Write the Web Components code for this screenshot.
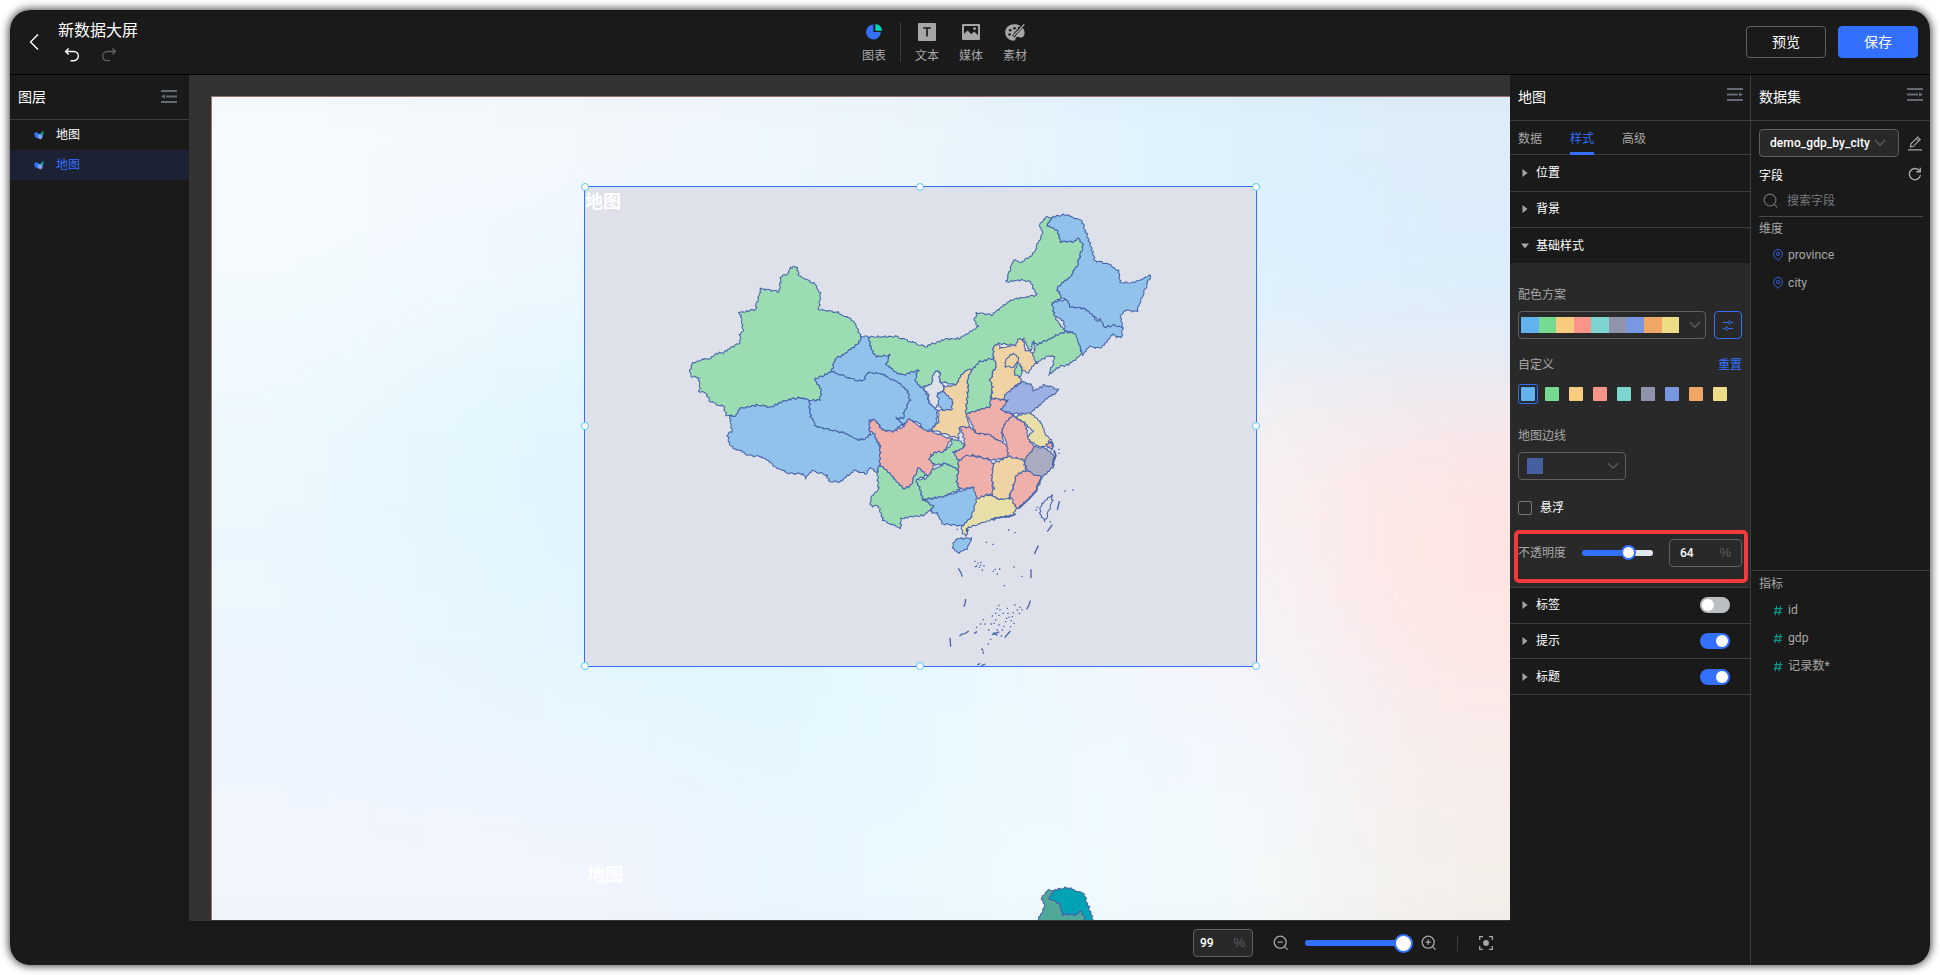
<!DOCTYPE html>
<html lang="zh">
<head>
<meta charset="utf-8">
<title>新数据大屏</title>
<style>
html,body{margin:0;height:100%;background:#fff;overflow:hidden}
body{font:12px/18px Roboto,"Noto Sans CJK SC",sans-serif;color:#fff}
</style>
</head>
<body>
<screen-editor></screen-editor>
<script>
const define = (name, html, setup) => customElements.define(name, class extends HTMLElement {
  connectedCallback() {
    if (this.shadowRoot) return;
    const t = document.createElement('template');
    t.innerHTML = '<style>*{box-sizing:border-box}svg{display:block}</style>' + (typeof html === 'function' ? html(this) : html);
    this.attachShadow({mode: 'open'}).append(t.content.cloneNode(true));
    if (setup) setup(this, this.shadowRoot);
  }
});

/* ---------- icons ---------- */
const ICONS = {
  back: [10, 18, '<path d="M9 1.5 1.5 9 9 16.5" fill="none" stroke="#fff" stroke-width="1.4"/>'],
  undo: [16, 16, '<path d="M4.6 1.5 1.6 4.5l3 3M1.8 4.5h8a4.6 4.6 0 0 1 0 9.2H6.6" fill="none" stroke="#fff" stroke-width="1.4"/>'],
  redo: [16, 16, '<path d="m11.4 1.5 3 3-3 3M14.2 4.5h-8a4.6 4.6 0 0 0 0 9.2h3.2" fill="none" stroke="#5f5f5f" stroke-width="1.3"/>'],
  chart: [16, 16, '<path d="M7.6 1.2v7.4H15A7.4 7.4 0 1 1 7.6 1.2z" transform="translate(-.2 -.6)" fill="#3370ff"/><path d="M9.4 0A6.8 6.8 0 0 1 16 6.8H9.4z" fill="#00d6b9"/>'],
  text: [18, 18, '<rect width="18" height="18" rx="1" fill="#a6a6a6"/><path d="M5.2 5h7.6M9 5v8.6" stroke="#1a1a1a" stroke-width="1.7"/>'],
  media: [18, 16, '<rect width="18" height="16" rx="1" fill="#a6a6a6"/><path d="M2 2h14v9l-4-3.6-2.6 2.8L5.6 6.6 2 9.8z" fill="#1a1a1a"/><circle cx="12.6" cy="4.6" r="1.4" fill="#a6a6a6"/>'],
  palette: [20, 17, '<path d="M9.5.3C4 .3.2 3.8.2 8.5s3.800 8.200 8.600 8.200c2.200 0 1.400-2.400 2.400-3.400 1.600-1.200 3.200.6 5.600.2 2-.4 3-2.900 2.800-5.300C19.200 3.400 15 .3 9.500.3z" fill="#a6a6a6"/><path d="M19 .2 10.600 9.400 8.600 12.600" stroke="#1a1a1a" stroke-width="3" fill="none"/><path d="M19.300.3 11 9.200 8.800 12" stroke="#a6a6a6" stroke-width="1.300" fill="none"/><g fill="#1a1a1a"><circle cx="9.500" cy="4.300" r="1.300"/><circle cx="5.200" cy="6.200" r="1.300"/><circle cx="4.600" cy="10.500" r="1.300"/><circle cx="13.800" cy="3.800" r="1"/></g>'],
  foldL: [16, 13, '<path d="M0 1h16M5 6.500h11M0 12h16" stroke="#646a73" stroke-width="2"/><path d="M0 6.500 4 4.200v4.600z" fill="#646a73"/>'],
  foldR: [16, 13, '<path d="M0 1h16M0 6.500h11M0 12h16" stroke="#646a73" stroke-width="2"/><path d="M16 6.500 12 4.200v4.600z" fill="#646a73"/>'],
  map: [10, 9, '<path d="M0 2.600 2.200.9l2 1.300L5.600 3 5.400 6.600 3.600 7.600 1 6z" fill="#3370ff"/><path d="M4.200 3.600 6.400 3l2.400 1.200L8.200 7.200 6.400 8.600 4 7z" fill="#7fa6f2"/><path d="M6.200 3 8.400.5l1.400.3-.6 2.600-1.700 1.200z" fill="#12a594"/>'],
  caret: [6, 8, '<path d="M.5 0 5.500 4 .5 8z" fill="#a6a6a6"/>'],
  caretDown: [8, 6, '<path d="M0 .5 4 5.500 8 .5z" fill="#a6a6a6"/>'],
  chevron: [12, 8, '<path d="m.8 1 5.200 5.200L11.200 1" fill="none" stroke="#5f6065" stroke-width="1.200"/>'],
  sliders: [10, 11, '<g fill="none" stroke="#3370ff"><path d="M0 2.500h4.800M8.200 2.500H10M0 8.500h2M5.400 8.500H10"/><circle cx="6.500" cy="2.500" r="1.500"/><circle cx="3.700" cy="8.500" r="1.500"/></g>'],
  edit: [14, 15, '<path d="M2.400 11 3 7.800 9.800 1l2.400 2.400-6.800 6.900z M8.400 2.600l2.300 2.300" fill="none" stroke="#a6a6a6" stroke-width="1.200"/><path d="M0 13.900h14" stroke="#a6a6a6" stroke-width="1.400"/>'],
  refresh: [14, 14, '<path d="M11.800 4.200A5.600 5.600 0 1 0 12.500 8" fill="none" stroke="#a6a6a6" stroke-width="1.400"/><path d="M12.300.8v4H8.300" fill="none" stroke="#a6a6a6" stroke-width="1.400"/>'],
  search: [16, 16, '<g fill="none" stroke="#6b6f76" stroke-width="1.200"><circle cx="7" cy="7" r="5.900"/><path d="m11.300 11.300 3 3"/></g>'],
  pin: [10, 12, '<g fill="none" stroke="#3563d8"><path d="M5 11.300C2.600 9.300.6 7.300.6 4.900a4.400 4.400 0 0 1 8.800 0c0 2.400-2 4.400-4.400 6.400z"/><circle cx="5" cy="4.900" r="1.600"/></g>'],
  hash: [10, 11, '<path d="M3.800.8 2.200 10.200M7.600.8 6 10.200M1.200 3.600h8M.6 7.400h8" stroke="#0a9a87" stroke-width="1.100"/>'],
  zoomOut: [16, 16, '<g fill="none" stroke="#a6a6a6" stroke-width="1.300"><circle cx="7.200" cy="7.200" r="6"/><path d="m11.600 11.600 3 3M4.600 7.200h5.200"/></g>'],
  zoomIn: [16, 16, '<g fill="none" stroke="#a6a6a6" stroke-width="1.300"><circle cx="7.200" cy="7.200" r="6"/><path d="m11.600 11.600 3 3M4.600 7.200h5.200M7.200 4.600v5.200"/></g>'],
  focus: [14, 14, '<path d="M.7 4V.7H4M10 .7h3.300V4M13.300 10v3.300H10M4 13.300H.7V10" fill="none" stroke="#a6a6a6" stroke-width="1.300"/><circle cx="7" cy="7" r="2.900" fill="#a6a6a6"/>']
};
define('ui-icon', el => {
  const [w, h, body] = ICONS[el.getAttribute('name')];
  return `<style>:host{display:block;flex:none;width:${w}px;height:${h}px}</style><svg width="${w}" height="${h}" viewBox="0 0 ${w} ${h}">${body}</svg>`;
});

/* ---------- small controls ---------- */
define('ui-button', `<style>
:host{display:flex;align-items:center;justify-content:center;width:80px;height:32px;border:1px solid #5f5f5f;border-radius:4px;box-sizing:border-box;font-size:14px;line-height:20px}
:host([primary]){background:#3370ff;border-color:#3370ff}</style><slot></slot>`);

define('ui-switch', `<style>
:host{display:flex;width:30px;height:16px;border-radius:8px;background:#bbbfc4;padding:2px;box-sizing:border-box}
:host([on]){background:#3370ff;justify-content:flex-end}
i{width:12px;height:12px;border-radius:50%;background:#fff}</style><i></i>`);

define('ui-number', `<style>
:host{display:flex;justify-content:space-between;align-items:center;height:28px;border:1px solid #5f5f5f;border-radius:4px;box-sizing:border-box;font-size:12px}
b{font-weight:500}
span{color:#5f6065;font:13px/18px "Liberation Sans",sans-serif}</style><b><slot></slot></b><span>%</span>`);

define('ui-slider', el => `<style>
:host{display:flex;align-items:center;height:20px}
div{display:flex;align-items:center;width:100%;height:6px;border-radius:3px;background:linear-gradient(90deg,#3370ff ${el.getAttribute('value')}%,#e4e7ed 0)}
i{flex:none;width:var(--thumb,15px);height:var(--thumb,15px);border-radius:50%;border:2px solid #3370ff;background:#fff;margin-left:calc(${el.getAttribute('value')}% - var(--thumb,15px)/2)}
</style><div><i></i></div>`);

/* ---------- header ---------- */
define('tool-item', el => `<style>
:host{display:flex;flex-direction:column;align-items:center;width:24px;font-size:12px;line-height:18px;color:#a6a6a6;white-space:nowrap}
div{height:20px;display:flex;align-items:center;margin-bottom:5px}</style>
<div><ui-icon name="${el.getAttribute('icon')}"></ui-icon></div><slot></slot>`);

define('top-bar', `<style>
:host{display:grid;grid-template-columns:852px 1fr auto;height:65px;border-bottom:1px solid #000;box-sizing:border-box}
.left{display:flex;padding:0 0 0 19px}
.left>ui-icon{margin-top:23px}
.name{margin-left:19px;padding-top:7px}
.name b{display:block;font:400 16px/24px "Noto Sans CJK SC",sans-serif;height:24px}
.hist{display:flex;gap:21px;margin:6px 0 0 6px}
.tools{display:flex;padding-top:12px}
.sep{width:1px;height:40px;background:#3c3c3c;margin:0 14px 0 14px}
.right{display:flex;gap:12px;padding:16px 12px 0 0}
tool-item+tool-item{margin-left:20px}
</style>
<div class="left"><ui-icon name="back"></ui-icon><div class="name"><b>新数据大屏</b><div class="hist"><ui-icon name="undo"></ui-icon><ui-icon name="redo"></ui-icon></div></div></div>
<div class="tools"><tool-item icon="chart">图表</tool-item><i class="sep"></i><tool-item icon="text">文本</tool-item><tool-item icon="media">媒体</tool-item><tool-item icon="palette">素材</tool-item></div>
<div class="right"><ui-button>预览</ui-button><ui-button primary>保存</ui-button></div>`);

/* ---------- panels ---------- */
define('panel-title', el => `<style>
:host{display:flex;align-items:center;justify-content:space-between;height:46px;padding:0 7px 2px 8px;border-bottom:1px solid #3d3d3d;box-sizing:border-box;font-size:14px;line-height:20px}
ui-icon{margin-top:var(--icon-shift,-4px)}</style><span><slot></slot></span><ui-icon name="${el.getAttribute('icon')}"></ui-icon>`);

define('layer-row', `<style>
:host{display:flex;align-items:center;height:30px;padding-left:24px;gap:12px}
:host([active]){background:#1c2133;color:#3370ff}</style><ui-icon name="map"></ui-icon><span><slot></slot></span>`);

define('layer-panel', `<style>:host{display:block}panel-title{height:45px;padding-right:12px;padding-bottom:1px;--icon-shift:0px}</style>
<panel-title icon="foldL">图层</panel-title><layer-row>地图</layer-row><layer-row active>地图</layer-row>`);

define('fold-row', el => `<style>
:host{display:flex;align-items:center;height:36px;padding:0 20px 0 12px;border-bottom:1px solid #3d3d3d;box-sizing:border-box}
:host([open]){border:0}
.c{width:14px;display:flex}:host([open]) .c{margin-left:-1px;width:15px}
span{flex:1}</style><div class="c"><ui-icon name="${el.hasAttribute('open') ? 'caretDown' : 'caret'}"></ui-icon></div><span><slot></slot></span><slot name="end"></slot>`);

const COLORS = ['#63b2ee','#76da91','#f8cb7f','#f89588','#7cd6cf','#9192ab','#7898e1','#efa666','#eddd86'];
define('style-panel', `<style>
:host{display:block;border-right:1px solid #3d3d3d;box-sizing:border-box}
nav{display:flex;gap:28px;padding-left:8px;height:34px;border-bottom:1px solid #3d3d3d;color:#a6a6a6}
nav span{height:34px;line-height:36px}
nav .on{color:#3370ff;border-bottom:3px solid #3370ff}
.body{background:#292929;height:325px;padding:23px 8px 0;border-bottom:1px solid #3d3d3d;color:#a6a6a6}
.row{display:flex;align-items:center;justify-content:space-between}
.select{display:flex;align-items:center;justify-content:space-between;border:1px solid #5f5f5f;border-radius:4px;height:28px}
.scheme{width:188px;padding:0 4px 0 2px;margin-top:7px}
.strip{display:flex;width:158px;height:16px}.strip i{flex:1}
.adj{width:28px;height:28px;border:1px solid #3370ff;border-radius:4px;display:flex;align-items:center;justify-content:center;margin-top:7px}
.custom{margin-top:17px}.custom u{color:#3370ff;text-decoration:none}
.sw{display:flex;gap:4px;margin-top:10px}
.sw b{width:20px;height:20px;padding:2px;border:1px solid transparent;border-radius:3px}
.sw b:first-child{border-color:#3370ff}
.sw i{display:block;width:14px;height:14px;border-radius:1px}
.line{width:108px;padding:0 6px 0 8px;margin-top:7px}
.line i{width:16px;height:16px;background:#465fa3}
.check{display:flex;align-items:center;gap:8px;margin-top:19px;color:#fff}
.check i{width:14px;height:14px;border:1px solid #76787c;border-radius:2px}
.opacity{display:flex;align-items:center;height:53px;margin:13px -6px 0 -4px;border:4px solid #f33a3a;border-radius:5px;padding:0 0 8px}
.opacity span{width:64px;white-space:nowrap}
.opacity ui-slider{width:71px}
.opacity ui-number{width:73px;margin-left:16px;padding:0 10px;color:#fff}
</style>
<panel-title icon="foldR">地图</panel-title>
<nav><span>数据</span><span class="on">样式</span><span>高级</span></nav>
<fold-row style="height:37px">位置</fold-row><fold-row style="padding-bottom:1px">背景</fold-row><fold-row open style="height:35px">基础样式</fold-row>
<div class="body">
 <div>配色方案</div>
 <div class="row"><div class="select scheme"><div class="strip">${COLORS.map(c => `<i style="background:${c}"></i>`).join('')}</div><ui-icon name="chevron"></ui-icon></div><div class="adj"><ui-icon name="sliders"></ui-icon></div></div>
 <div class="row custom"><span>自定义</span><u>重置</u></div>
 <div class="sw">${COLORS.map(c => `<b><i style="background:${c}"></i></b>`).join('')}</div>
 <div style="margin-top:23px">地图边线</div>
 <div class="select line"><i></i><ui-icon name="chevron"></ui-icon></div>
 <div class="check"><i></i>悬浮</div>
 <div class="opacity"><span>不透明度</span><ui-slider value="65"></ui-slider><ui-number>64</ui-number></div>
</div>
<fold-row style="padding-bottom:1px">标签<ui-switch slot="end"></ui-switch></fold-row>
<fold-row style="height:35px">提示<ui-switch slot="end" on></ui-switch></fold-row>
<fold-row>标题<ui-switch slot="end" on></ui-switch></fold-row>`);

define('field-item', el => `<style>
:host{display:flex;align-items:center;height:28px;padding-left:14px;gap:5px;color:#a6a6a6}</style>
<ui-icon name="${el.getAttribute('icon')}"></ui-icon><span><slot></slot></span>`);

define('data-panel', `<style>
:host{display:block}
.pad{padding:8px 8px 0 8px;height:449px}
.row{display:flex;align-items:center;justify-content:space-between}
.sel{width:140px;height:28px;border:1px solid #5f5f5f;border-radius:4px;background:#292929;display:flex;align-items:center;padding:0 0 0 10px;gap:4px;font-weight:500;letter-spacing:.09px;white-space:nowrap}
.find{display:flex;align-items:center;gap:8px;height:32px;border-bottom:1px solid #4a4a4a;color:#75787d;padding:1px 0 0 4px;margin-right:-1px}
.m{color:#a6a6a6}
.low{border-top:1px solid #3d3d3d;padding:4px 8px}
field-item{font-size:12.200px}
</style>
<panel-title icon="foldR">数据集</panel-title>
<div class="pad">
 <div class="row"><div class="sel"><span>demo_gdp_by_city</span><ui-icon name="chevron"></ui-icon></div><ui-icon name="edit"></ui-icon></div>
 <div class="row" style="margin-top:10px"><span>字段</span><ui-icon name="refresh" style="margin-top:-4px"></ui-icon></div>
 <div class="find"><ui-icon name="search"></ui-icon><span>搜索字段</span></div>
 <div class="m" style="margin:3px 0 3px">维度</div>
 <field-item icon="pin">province</field-item><field-item icon="pin">city</field-item>
</div>
<div class="low"><div class="m" style="margin-bottom:3px">指标</div>
<field-item icon="hash">id</field-item><field-item icon="hash">gdp</field-item><field-item icon="hash">记录数*</field-item></div>`);

/* ---------- map widget ----------
   Outlines are survey points at 3x scale. A, B and C are the origins of the
   western, north-eastern and southern sheets. */
const ORIGIN = {A: [0, 0], B: [780, 0], C: [480, 600]};
const REGIONS = [
 ['g','A 28,512 38,490 75,475 85,480 103,462 128,458 180,428 180,405 190,395 182,345 176,338 230,328 228,318 243,266 298,275 303,230 326,220 330,203 350,200 355,222 375,238 405,250 422,285 416,328 475,338 520,362 543,408 538,430 490,465 466,475 455,515 405,538 425,570 420,600 388,602 360,592 315,602 270,622 235,615 182,625 165,648 140,645 130,620 90,605 78,580 52,572 60,565 55,532 35,530'],
 ['b','A 150,650 165,648 182,625 235,615 270,622 315,602 360,592 388,602 392,650 410,680 500,700 540,720 570,705 582,700 600,745 603,795 590,815 570,805 560,822 525,812 480,845 448,845 440,825 395,812 378,836 370,822 320,820 280,795 245,770 205,765 150,738 142,700 155,695'],
 ['b','A 543,408 565,410 575,450 590,470 630,465 618,495 645,515 668,525 715,510 705,540 722,562 735,570 750,612 772,628 770,665 755,690 730,695 720,672 690,658 670,675 655,655 670,655 672,635 690,600 680,568 640,540 600,520 560,518 555,540 530,542 455,515 466,475 490,465 538,430'],
 ['b','A 455,515 405,538 425,570 420,600 388,602 392,650 410,680 500,700 525,718 555,718 570,700 568,660 585,658 605,688 640,695 655,680 670,675 645,652 670,655 672,635 690,600 680,568 640,540 600,520 560,518 555,540 530,542'],
 ['b','A 772,580 790,575 820,595 818,628 795,632 772,615'],
 ['g','A 565,410 650,410 735,440 795,418 B 60,415 115,378 103,360 110,338 155,345 178,325 220,298 292,285 270,245 245,240 198,245 220,180 245,187 278,165 308,100 298,72 315,52 335,52 322,78 352,90 362,125 405,125 415,115 430,135 412,195 395,225 350,262 365,295 335,308 345,350 375,395 290,435 280,422 272,455 250,415 225,435 175,430 160,440 160,475 120,485 95,508 75,512 45,555 20,548 A 778,545 780,515 765,515 755,552 722,562 705,540 715,510 668,525 645,515 618,495 630,465 590,470 575,450'],
 ['b','B 335,52 375,43 425,62 450,130 465,182 500,190 535,210 542,248 580,248 632,226 622,250 590,335 555,330 542,350 548,385 525,375 495,382 480,360 460,350 430,325 390,322 380,298 365,295 350,262 395,225 412,195 430,135 415,115 405,125 362,125 352,90 322,78'],
 ['b','B 335,308 380,298 390,322 430,325 460,350 470,365 480,357 495,382 525,375 548,385 545,410 530,412 520,402 480,445 450,440 428,465 420,440 400,400 375,390 370,360 345,350'],
 ['g','B 280,422 290,435 375,395 405,400 420,440 425,465 390,492 360,500 325,525 340,490 343,470 325,467 290,490 270,470 285,450'],
 ['n','A 772,510 780,520 778,545 792,555 788,575 770,580 778,600 768,625 748,612 745,580 730,562 755,552 760,520'],
 ['t','B 95,508 75,512 45,555 12,560 8,575 38,600 35,628 -5,632 -5,665 -25,690 10,700 55,715 60,680 90,683 78,642 85,560 82,540'],
 ['g','B 95,508 120,485 160,475 170,490 150,540 158,560 152,595 150,620 78,642 85,560 82,540'],
 ['t','B 160,440 175,430 180,445 225,435 240,413 252,425 255,450 272,455 290,488 265,518 248,512 240,490 235,528 245,545 215,565 195,600 155,595 158,560 150,540 165,505 170,490 160,475'],
 ['t','B 195,490 205,470 218,460 235,475 230,490 222,502 195,500'],
 ['g','B 235,485 242,500 247,515 240,530 222,525 225,508'],
 ['p','B 78,642 150,620 152,595 190,600 205,605 180,628 218,645 205,660 185,690 190,730 150,705 110,700'],
 ['p','B 60,680 90,683 110,700 150,705 190,730 205,740 205,770 165,780 135,775 100,765 55,782 35,760 75,742 72,715'],
 ['p','B 218,645 255,670 262,700 270,725 282,740 260,785 205,770 200,730 185,690 205,660'],
 ['y','B 215,640 225,650 270,635 305,670 315,700 338,725 305,742 270,725 260,710 278,695 255,670'],
 ['v','B 190,600 200,580 250,545 275,555 280,572 315,555 355,568 350,580 325,590 270,640 215,640 180,628 205,600'],
 ['p','B 320,730 335,730 338,745 322,743'],
 ['s','B 252,785 282,740 320,745 345,770 340,800 305,832 265,820'],
 ['p','C 88,92 90,62 105,58 125,90 160,95 190,80 210,55 250,90 275,95 335,118 310,155 270,165 280,190 280,225 262,225 235,205 210,260 190,265 145,215 120,198 120,135 100,100'],
 ['g','C 118,198 145,215 190,265 210,260 235,205 262,225 228,240 240,265 248,300 284,318 255,345 182,355 182,385 130,362 115,318 92,318 92,295 115,268 112,215'],
 ['g','C 335,115 372,130 370,145 340,155 355,185 355,212 320,190 285,195 268,180 280,158 310,155 335,130'],
 ['g','C 228,240 262,235 275,210 320,190 355,212 350,240 358,268 310,290 248,298 240,265'],
 ['p','C 355,182 380,165 435,175 462,190 455,235 462,285 440,283 410,298 398,262 358,268 350,240 355,212'],
 ['t','C 460,190 505,170 550,178 558,212 530,225 520,260 503,300 480,298 455,285 462,265 455,235'],
 ['p','C 558,212 605,232 590,270 570,290 530,328 505,300 520,260 530,225'],
 ['b','C 248,300 310,290 398,262 415,300 395,350 365,378 310,372 290,340 270,335 284,318'],
 ['y','C 410,298 440,283 462,290 480,298 515,295 528,322 520,345 465,355 380,385 380,408 368,402 365,378 395,350'],
 ['b','C 338,430 355,415 395,415 382,445 360,458 340,450'],
 ['n','C 635,285 638,300 615,365 598,340 605,310']
];
const PALETTES = {
  soft: {g:'#9cdcb2', b:'#90c2eb', p:'#efafab', t:'#efd3a5', v:'#9cb0e3', y:'#e8dfa9', s:'#a9abc0', n:'#dee1e9', line:'#4764ab'},
  deep: {g:'#4fa898', b:'#00a3b4', p:'#00a3b4', t:'#4fa898', v:'#4fa898', y:'#4fa898', s:'#4fa898', n:'none', line:'#4764ab'}
};
const DASHES = 'M658 303l-6 27M637 374l-15 21M595 437l-12 25M573 508v26M571 602q-3 14-11 26M511 693l-17 20M355 505q9 12 12 25M376 597q2 12-5 23M330 714l2 26M412 795l8-5M424 797l12-5M358 708l12-8M372 703l14-10M456 704l22-8M460 698l12 8M403 700l8-5M425 745l4 8M430 755v6';
const ISLETS = [[504,390],[523,398],[437,427],[457,433],[403,484],[421,487],[408,498],[416,502],[425,510],[412,490],[430,498],[404,500],[420,496],[458,514],[464,508],[470,522],[477,507],[520,501],[544,529],[491,557],[475,616],[470,626],[478,629],[465,640],[475,646],[455,648],[500,625],[518,638],[530,630],[538,622],[544,629],[536,640],[505,652],[515,650],[498,655],[520,670],[512,662],[465,660],[475,675],[460,670],[428,659],[420,672],[433,672],[408,682],[444,690],[452,672],[490,680],[485,690],[470,690],[482,708],[450,718],[443,732],[673,273],[697,270],[629,365],[586,330],[590,322],[350,388],[633,150],[640,158],[655,148],[655,160],[510,680],[495,665],[523,615],[488,640],[502,640]];
/* position-based wobble, so borders shared by two regions stay together */
const wobble = (x, y) => [x + 2 * Math.sin(x * .31 + y * .37) + 1.1 * Math.sin(y * .63 - x * .49), y + 2 * Math.sin(y * .33 - x * .35 + 2) + 1.1 * Math.sin(x * .59 + y * .43)];
function outline(src) {
  let o = ORIGIN.A; const pts = [];
  for (const tok of src.split(' ')) {
    if (ORIGIN[tok]) { o = ORIGIN[tok]; continue; }
    const [x, y] = tok.split(',').map(Number); pts.push([x + o[0], y + o[1]]);
  }
  let d = '';
  pts.forEach(([x, y], i) => {
    const [u, v] = pts[(i + 1) % pts.length], n = Math.max(1, Math.round(Math.hypot(u - x, v - y) / 4));
    for (let k = 0; k < n; k++) { const w = wobble(x + (u - x) * k / n, y + (v - y) * k / n); d += (d ? 'L' : 'M') + w[0].toFixed(1) + ' ' + w[1].toFixed(1); }
  });
  return d + 'z';
}
define('map-widget', el => {
  const c = PALETTES[el.getAttribute('palette')];
  return `<style>:host{display:block;position:absolute;width:673px;height:481px;overflow:hidden;box-sizing:border-box}
  h3{margin:0;font:700 18px/26px "Noto Sans CJK SC",sans-serif;color:#fff;padding:1px 0 0 1px;height:26px}
  svg{margin-top:-26px}</style>
  <h3><slot></slot></h3>
  <svg width="673" height="481" viewBox="584 186 673 481"><g transform="translate(680 200) scale(.33333)" stroke="${c.line}" stroke-width="3.100" stroke-linejoin="round">
  ${REGIONS.map(([k, s]) => `<path d="${outline(s)}" fill="${c[k]}"/>`).join('')}
  <g transform="translate(480 600)" fill="none" stroke-width="4"><path d="${DASHES}"/>
  <path d="${ISLETS.map(([x, y]) => `M${x} ${y}h4`).join('')}"/>
  <path d="M642 150l6 18-8 10-2 20M606 232l-14 24-2 16-22 24-32 30M528 342l-20 8-46 4M454 356l8 4 6-6M378 386l6 4-4 6M624 122l14 8 2 12" stroke-width="5"/></g></g></svg>`;
});

const MESH = [
 '#f7fafe #f5f9fe #f3f7fc #eff7fc #ebf5fc #e2f3fd #dcf1fd #dfecf9',
 '#f3fafe #eff9fe #e8f7fe #e5f5fe #e5f3fd #e0f3fd #dbf1fe #d9effe',
 '#ecf8fe #e2f6fe #def4ff #e0f4ff #e8f4fc #f2f4f7 #f9efee #fce6e6',
 '#ebf7fe #e5f6ff #e2f5ff #e3f6ff #e8f6ff #f1f5fc #f8f1f2 #ffe4e2',
 '#eef5fe #e9f5ff #e5f6ff #e2f6ff #e8f9ff #eff8ff #f3f6fd #f9ebea',
 '#f1f5fe #f3f5fd #f2f5fd #eaf6ff #ebf9ff #f1fbff #f3f9fa #f4efea'].map(r => r.split(' '));
define('canvas-stage', () => {
  let cells = '';
  for (let r = -1; r < 7; r++) for (let q = -1; q < 9; q++)
    cells += `<rect x="${q * 162.5}" y="${r * 137.5}" width="164" height="139" fill="${MESH[Math.min(5, Math.max(0, r))][Math.min(7, Math.max(0, q))]}"/>`;
  return `<style>
  :host{display:block;background:#333;padding:21px 0 0 22px;overflow:hidden}
  .sheet{position:relative;height:824px;border:1px solid #98706e;border-width:1px 0 0 1px;overflow:hidden}
  .bg{position:absolute;inset:0}
  .sel{position:absolute;left:372px;top:89px;width:673px;height:481px;border:1px solid #3370ff;background:#dee1e9}
  .sel map-widget{left:-1px;top:-1px;height:480px}
  .sel i{position:absolute;width:8px;height:8px;border:1px solid #59c7f9;border-radius:50%;background:#fff;margin:-4.500px}
  .two{left:374px;top:762px}
  </style><div class="sheet"><svg class="bg" width="1300" height="825"><defs><filter id="f" x="-20%" y="-20%" width="140%" height="140%" color-interpolation-filters="sRGB"><feGaussianBlur stdDeviation="68"/></filter></defs><g filter="url(#f)">${cells}</g></svg>
  <map-widget class="two" palette="deep">地图</map-widget>
  <div class="sel"><map-widget palette="soft">地图</map-widget>
  ${[0, 50, 100].map(y => [0, 50, 100].filter(x => x !== 50 || y !== 50).map(x => `<i style="left:${x}%;top:${y}%"></i>`).join('')).join('')}</div></div>`;
});

define('zoom-bar', `<style>
:host{display:flex;align-items:center;justify-content:flex-end;border-top:1px solid #333;padding:0 17px 0 0;box-sizing:border-box}
ui-number{width:60px;background:#292929;padding:0 7px 0 6px;margin-right:20px}
ui-slider{width:107px;--thumb:19px;margin:0 9px 0 16px}
i{width:1px;height:16px;background:#3d3d3d;margin:0 21px 0 20px}
</style><ui-number>99</ui-number><ui-icon name="zoomOut"></ui-icon><ui-slider value="92.500"></ui-slider><ui-icon name="zoomIn"></ui-icon><i></i><ui-icon name="focus"></ui-icon>`);

define('screen-editor', `<style>
:host{display:block;padding:10px}
main{height:955px;border-radius:20px;background:#1a1a1a;overflow:hidden}
.shadow{border-radius:20px;box-shadow:0 0 9px 1px rgba(0,0,0,.75)}
.work{display:grid;grid-template-columns:179px 1321px 241px 179px;height:890px}
.mid{display:grid;grid-template-rows:845px 45px;min-width:0}
</style><div class="shadow"><main><top-bar></top-bar><div class="work"><layer-panel></layer-panel><div class="mid"><canvas-stage></canvas-stage><zoom-bar></zoom-bar></div><style-panel></style-panel><data-panel></data-panel></div></main></div>`);
</script>
</body>
</html>
